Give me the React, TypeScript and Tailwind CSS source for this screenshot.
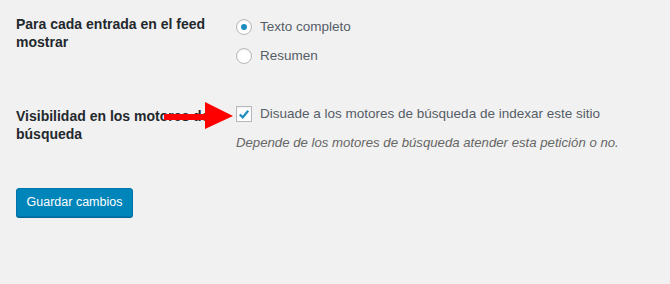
export default function App() {
  return (
    <div className="relative w-[670px] h-[284px] bg-[#f1f1f1] pt-[15px] text-[13px] font-['Liberation_Sans',Arial,sans-serif] overflow-hidden">
      {/* Feed row */}
      <div className="flex">
        <div className="w-[236px] shrink-0 pl-4 pr-2 text-[14px] leading-[18px] font-bold text-[#23282d]">
          Para cada entrada en el feed mostrar
        </div>
        <div className="flex flex-col gap-[5px] text-[13.5px] text-[#555d66]">
          <label className="h-6 flex items-center">
            <span className="w-4 h-4 rounded-full bg-white border border-[#b4b9be] shadow-[inset_0_1px_2px_rgba(0,0,0,0.07)] flex items-center justify-center mr-2">
              <span className="w-[6px] h-[6px] rounded-full bg-[#1e8cbe]" />
            </span>
            Texto completo
          </label>
          <label className="h-6 flex items-center">
            <span className="w-4 h-4 rounded-full bg-white border border-[#b4b9be] shadow-[inset_0_1px_2px_rgba(0,0,0,0.07)] mr-2" />
            Resumen
          </label>
        </div>
      </div>

      {/* Visibility row */}
      <div className="flex mt-[34px]">
        <div className="w-[236px] shrink-0 pl-4 pr-2 mt-[5px] text-[14px] leading-[18px] font-bold text-[#23282d]">
          Visibilidad en los motores de búsqueda
        </div>
        <div className="flex flex-col">
          <label className="h-6 flex items-center text-[13.5px] text-[#555d66]">
            <span className="w-4 h-4 bg-white border border-[#b4b9be] shadow-[inset_0_1px_2px_rgba(0,0,0,0.07)] flex items-center justify-center mr-2">
              <svg viewBox="0 0 16 16" className="w-[15px] h-[15px]">
                <path d="M3.2 8 L6.5 11.3 L12.8 3.8" fill="none" stroke="#1e8cbe" strokeWidth="2.6" />
              </svg>
            </span>
            Disuade a los motores de búsqueda de indexar este sitio
          </label>
          <p className="mt-[8px] leading-[18px] text-[13.2px] italic text-[#666]">
            Depende de los motores de búsqueda atender esta petición o no.
          </p>
        </div>
      </div>

      <button className="ml-4 mt-[36px] w-[117px] h-[29px] rounded-[3px] bg-[#0085ba] border border-[#0073aa] text-[12.5px] text-white shadow-[0_1px_0_#006799]">
        Guardar cambios
      </button>

      {/* red arrow annotation */}
      <svg className="absolute left-0 top-0" width="670" height="284">
        <rect x="164" y="114" width="42" height="6" fill="#f00" />
        <polygon points="205,102 233,116 205,129" fill="#f00" />
      </svg>
    </div>
  );
}
